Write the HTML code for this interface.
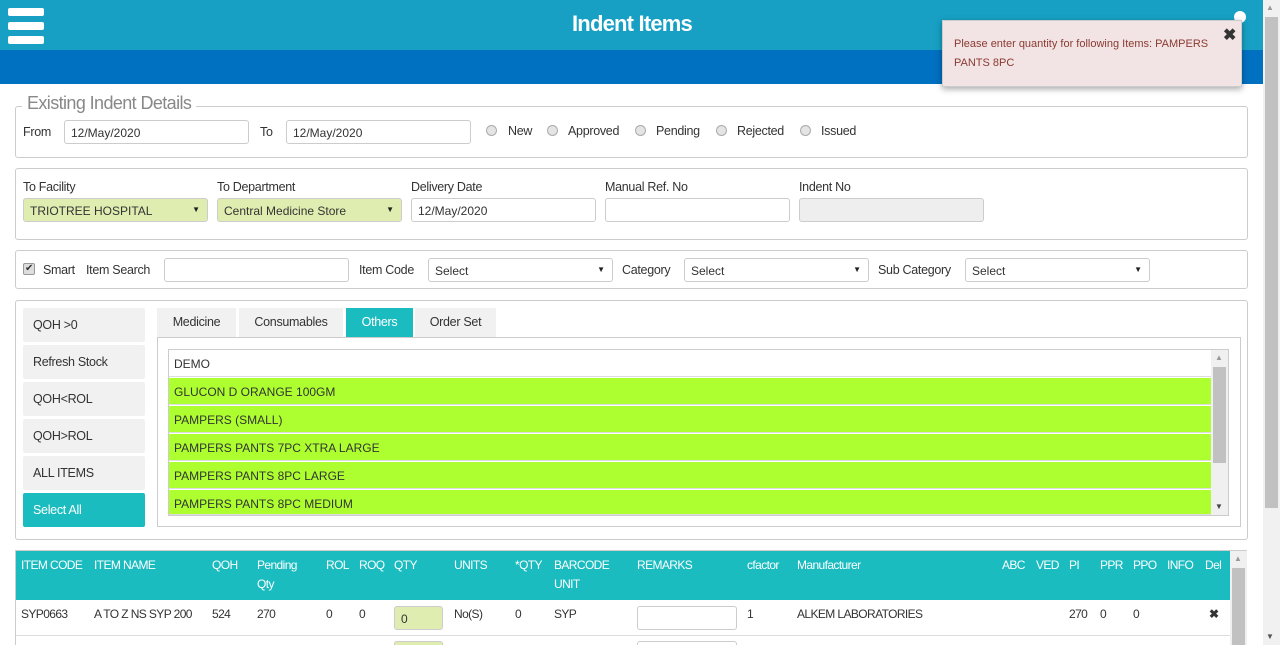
<!DOCTYPE html>
<html style="overflow:hidden;width:1280px;height:645px"><head><meta charset="utf-8"><style>
*{box-sizing:border-box;margin:0;padding:0}
body{width:1280px;height:645px;overflow:hidden;background:#fff;position:relative;font-family:"Liberation Sans",sans-serif;font-size:12.5px;letter-spacing:-0.3px;color:#333}
.a{position:absolute}
.t{position:absolute;white-space:nowrap;line-height:16px}
.box{position:absolute;border:1px solid #ccc;border-radius:3px}
.in{position:absolute;border:1px solid #ccc;border-radius:3px;height:24px;background:#fff;font-size:12px;padding:5px 6px;white-space:nowrap;letter-spacing:0}
.g{background:#dfedb0}
.sel:after{content:"▼";position:absolute;right:7px;top:6px;font-size:8px;color:#222}
.rad{position:absolute;width:11px;height:11px;border-radius:50%;border:1px solid #aaa;background:#e4e4e4}
.btn{position:absolute;left:23px;width:122px;height:34px;background:#f1f1f1;padding:10px;line-height:14px;border-radius:2px}
.tab{position:absolute;top:308px;height:29px;background:#f1f1f1;padding-top:7px;text-align:center}
.row{position:absolute;left:169px;width:1042px;height:27px;background:#adff2f;padding:7px 5px;font-size:12px;letter-spacing:0;border-bottom:1px solid #ddd}
.h{position:absolute;color:#fff;line-height:19px;white-space:nowrap;font-size:12px;letter-spacing:-0.6px}
.c{position:absolute;top:606px;white-space:nowrap;line-height:16px;font-size:12px;letter-spacing:-0.6px}
</style></head><body>
<div class="a" style="left:0;top:0;width:1263px;height:50px;background:#17a0c4"></div>
<div class="a" style="left:0;top:50px;width:1263px;height:34px;background:#0070c0"></div>
<div class="a" style="left:8px;top:8px;width:36px;height:8px;background:#fff;border-radius:2px"></div>
<div class="a" style="left:8px;top:22px;width:36px;height:8px;background:#fff;border-radius:2px"></div>
<div class="a" style="left:8px;top:36px;width:36px;height:8px;background:#fff;border-radius:2px"></div>
<div class="t" style="left:520px;top:11px;width:224px;text-align:center;color:#fff;font-size:22px;line-height:26px;font-weight:bold;letter-spacing:-0.8px">Indent Items</div>
<div class="a" style="left:1234px;top:11px;width:12px;height:12px;border-radius:50%;background:#fff"></div>
<div class="a" style="left:1263px;top:0;width:17px;height:645px;background:#f1f1f1"></div>
<div class="a" style="left:1265px;top:17px;width:13px;height:491px;background:#c1c1c1"></div>
<div class="t" style="left:1266px;top:0;font-size:8px;color:#999">▲</div>
<div class="t" style="left:1266px;top:629px;font-size:8px;color:#555">▼</div>
<div class="box" style="left:15px;top:106px;width:1233px;height:52px"></div>
<div class="t" style="left:22px;top:92px;padding:0 5px;background:#fff;font-size:18px;line-height:22px;color:#888;letter-spacing:-0.6px">Existing Indent Details</div>
<div class="t" style="left:23px;top:124px">From</div>
<div class="in" style="left:64px;top:120px;width:185px">12/May/2020</div>
<div class="t" style="left:260px;top:124px">To</div>
<div class="in" style="left:286px;top:120px;width:185px">12/May/2020</div>
<div class="rad" style="left:486px;top:125px"></div><div class="t" style="left:508px;top:123px">New</div>
<div class="rad" style="left:547px;top:125px"></div><div class="t" style="left:568px;top:123px">Approved</div>
<div class="rad" style="left:635px;top:125px"></div><div class="t" style="left:656px;top:123px">Pending</div>
<div class="rad" style="left:716px;top:125px"></div><div class="t" style="left:737px;top:123px">Rejected</div>
<div class="rad" style="left:800px;top:125px"></div><div class="t" style="left:821px;top:123px">Issued</div>
<div class="box" style="left:15px;top:168px;width:1233px;height:72px"></div>
<div class="t" style="left:23px;top:179px">To Facility</div>
<div class="t" style="left:217px;top:179px">To Department</div>
<div class="t" style="left:411px;top:179px">Delivery Date</div>
<div class="t" style="left:605px;top:179px">Manual Ref. No</div>
<div class="t" style="left:799px;top:179px">Indent No</div>
<div class="in g sel" style="left:23px;top:198px;width:185px">TRIOTREE HOSPITAL</div>
<div class="in g sel" style="left:217px;top:198px;width:185px">Central Medicine Store</div>
<div class="in" style="left:411px;top:198px;width:185px">12/May/2020</div>
<div class="in" style="left:605px;top:198px;width:185px"></div>
<div class="in" style="left:799px;top:198px;width:185px;background:#eee"></div>
<div class="box" style="left:15px;top:250px;width:1233px;height:39px"></div>
<div class="a" style="left:23px;top:263px;width:12px;height:12px;border:1px solid #999;border-radius:2px;background:#ddd;font-size:10px;line-height:10px;text-align:center">✔</div>
<div class="t" style="left:43px;top:262px">Smart</div>
<div class="t" style="left:86px;top:262px">Item Search</div>
<div class="in" style="left:164px;top:258px;width:185px"></div>
<div class="t" style="left:359px;top:262px">Item Code</div>
<div class="in sel" style="left:428px;top:258px;width:185px">Select</div>
<div class="t" style="left:622px;top:262px">Category</div>
<div class="in sel" style="left:684px;top:258px;width:185px">Select</div>
<div class="t" style="left:878px;top:262px">Sub Category</div>
<div class="in sel" style="left:965px;top:258px;width:185px">Select</div>
<div class="box" style="left:15px;top:300px;width:1233px;height:240px"></div>
<div class="btn" style="top:308px">QOH &gt;0</div>
<div class="btn" style="top:345px">Refresh Stock</div>
<div class="btn" style="top:382px">QOH&lt;ROL</div>
<div class="btn" style="top:419px">QOH&gt;ROL</div>
<div class="btn" style="top:456px">ALL ITEMS</div>
<div class="btn" style="top:493px;background:#1bbcc0;color:#fff">Select All</div>
<div class="tab" style="left:157px;width:79px">Medicine</div>
<div class="tab" style="left:239px;width:104px">Consumables</div>
<div class="tab" style="left:346px;width:67px;background:#1bbcc0;color:#fff">Others</div>
<div class="tab" style="left:415px;width:81px">Order Set</div>
<div class="a" style="left:157px;top:337px;width:1084px;height:190px;border:1px solid #ccc"></div>
<div class="a" style="left:168px;top:349px;width:1061px;height:167px;border:1px solid #ccc"></div>
<div class="row" style="top:350px;background:#fff">DEMO</div>
<div class="row" style="top:378px">GLUCON D ORANGE 100GM</div>
<div class="row" style="top:406px">PAMPERS (SMALL)</div>
<div class="row" style="top:434px">PAMPERS PANTS 7PC XTRA LARGE</div>
<div class="row" style="top:462px">PAMPERS PANTS 8PC LARGE</div>
<div class="row" style="top:490px;height:25px">PAMPERS PANTS 8PC MEDIUM</div>
<div class="a" style="left:1211px;top:350px;width:17px;height:165px;background:#f0f0f0"></div>
<div class="a" style="left:1213px;top:367px;width:13px;height:96px;background:#c1c1c1"></div>
<div class="t" style="left:1215px;top:350px;font-size:8px;color:#999">▲</div>
<div class="t" style="left:1215px;top:499px;font-size:8px;color:#444">▼</div>
<div class="a" style="left:15px;top:550px;width:1232px;height:95px;border:1px solid #ccc;border-bottom:none"></div>
<div class="a" style="left:16px;top:551px;width:1214px;height:49px;background:#1abcc0"></div>
<div class="a" style="left:16px;top:635px;width:1214px;height:1px;background:#ddd"></div>
<div class="a" style="left:1230px;top:551px;width:17px;height:94px;background:#f0f0f0"></div>
<div class="a" style="left:1232px;top:568px;width:13px;height:77px;background:#c1c1c1"></div>
<div class="t" style="left:1234px;top:551px;font-size:8px;color:#999">▲</div>
<div class="h" style="left:21px;top:556px">ITEM CODE</div>
<div class="h" style="left:94px;top:556px">ITEM NAME</div>
<div class="h" style="left:212px;top:556px">QOH</div>
<div class="h" style="left:257px;top:556px">Pending<br>Qty</div>
<div class="h" style="left:326px;top:556px">ROL</div>
<div class="h" style="left:359px;top:556px">ROQ</div>
<div class="h" style="left:394px;top:556px">QTY</div>
<div class="h" style="left:454px;top:556px">UNITS</div>
<div class="h" style="left:515px;top:556px">*QTY</div>
<div class="h" style="left:554px;top:556px">BARCODE<br>UNIT</div>
<div class="h" style="left:637px;top:556px">REMARKS</div>
<div class="h" style="left:747px;top:556px">cfactor</div>
<div class="h" style="left:797px;top:556px">Manufacturer</div>
<div class="h" style="left:1002px;top:556px">ABC</div>
<div class="h" style="left:1036px;top:556px">VED</div>
<div class="h" style="left:1069px;top:556px">PI</div>
<div class="h" style="left:1100px;top:556px">PPR</div>
<div class="h" style="left:1133px;top:556px">PPO</div>
<div class="h" style="left:1167px;top:556px">INFO</div>
<div class="h" style="left:1205px;top:556px">Del</div>
<div class="c" style="left:21px">SYP0663</div>
<div class="c" style="left:94px">A TO Z NS SYP 200</div>
<div class="c" style="left:212px">524</div>
<div class="c" style="left:257px">270</div>
<div class="c" style="left:326px">0</div>
<div class="c" style="left:359px">0</div>
<div class="in g" style="left:394px;top:606px;width:49px">0</div>
<div class="c" style="left:454px">No(S)</div>
<div class="c" style="left:515px">0</div>
<div class="c" style="left:554px">SYP</div>
<div class="in" style="left:637px;top:606px;width:100px"></div>
<div class="c" style="left:747px">1</div>
<div class="c" style="left:797px">ALKEM LABORATORIES</div>
<div class="c" style="left:1069px">270</div>
<div class="c" style="left:1100px">0</div>
<div class="c" style="left:1133px">0</div>
<div class="c" style="left:1209px;font-weight:bold">✖</div>
<div class="a g" style="left:394px;top:641px;width:49px;height:4px;border:1px solid #ccc;border-bottom:none;border-radius:3px 3px 0 0"></div>
<div class="a" style="left:637px;top:641px;width:100px;height:4px;border:1px solid #ccc;border-bottom:none;border-radius:3px 3px 0 0"></div>
<div class="a" style="left:942px;top:20px;width:300px;height:67px;background:#f2e3e5;border:1px solid #ccc;box-shadow:0 2px 6px rgba(0,0,0,0.35)"></div>
<div class="t" style="left:954px;top:35px;width:270px;white-space:normal;line-height:19px;font-size:11px;letter-spacing:0;color:#8a3b30">Please enter quantity for following Items: PAMPERS PANTS 8PC</div>
<div class="t" style="left:1223px;top:28px;font-size:16px;color:#333;font-weight:bold">✖</div>
</body></html>
